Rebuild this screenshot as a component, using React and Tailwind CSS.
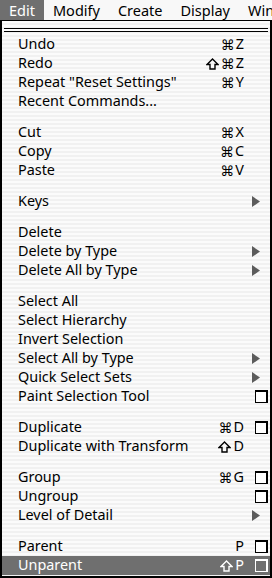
import React from 'react';

const CMD = '\u2318';
const SHIFT = '\u21E7';

// each group is separated by a blank gap
const groups = [
  [
    { label: 'Undo', key: CMD + 'Z' },
    { label: 'Redo', key: SHIFT + CMD + 'Z' },
    { label: 'Repeat "Reset Settings"', key: CMD + 'Y' },
    { label: 'Recent Commands...' }
  ],
  [
    { label: 'Cut', key: CMD + 'X' },
    { label: 'Copy', key: CMD + 'C' },
    { label: 'Paste', key: CMD + 'V' }
  ],
  [{ label: 'Keys', sub: true }],
  [
    { label: 'Delete' },
    { label: 'Delete by Type', sub: true },
    { label: 'Delete All by Type', sub: true }
  ],
  [
    { label: 'Select All' },
    { label: 'Select Hierarchy' },
    { label: 'Invert Selection' },
    { label: 'Select All by Type', sub: true },
    { label: 'Quick Select Sets', sub: true },
    { label: 'Paint Selection Tool', box: true }
  ],
  [
    { label: 'Duplicate', key: CMD + 'D', box: true },
    { label: 'Duplicate with Transform', key: SHIFT + 'D' }
  ],
  [
    { label: 'Group', key: CMD + 'G', box: true },
    { label: 'Ungroup', box: true },
    { label: 'Level of Detail', sub: true }
  ],
  [
    { label: 'Parent', key: 'P', box: true },
    { label: 'Unparent', key: SHIFT + 'P', box: true, active: true }
  ]
];

const menus = ['Modify', 'Create', 'Display', 'Window'];

function OptionBox({ active }) {
  return (
    <span
      className={`block w-[13px] h-[13px] border-l-[1.5px] border-b-[1.5px] border-t-[2.5px] border-r-[2.5px] ${
        active ? 'border-white bg-[#6f6f6f]' : 'border-black bg-white'
      }`}
    />
  );
}

function Arrow() {
  return (
    <svg width="8" height="11" viewBox="0 0 8 11" className="mr-[8px]">
      <path d="M0 0 L8 5.5 L0 11 Z" fill="#5c5c5c" />
    </svg>
  );
}

function ShiftGlyph({ active }) {
  return (
    <svg width="13" height="12" viewBox="0 0 13 12" className="mr-[2px]">
      <path
        d="M6.5 1 L12 6.5 H9 V11 H4 V6.5 H1 Z"
        fill="none"
        stroke={active ? '#fff' : '#000'}
        strokeWidth="1.4"
        strokeLinejoin="miter"
      />
    </svg>
  );
}

function Key({ text, active }) {
  return (
    <span className="whitespace-nowrap flex items-center">
      {[...text].map((c, i) => {
        if (c === SHIFT) return <ShiftGlyph key={i} active={active} />;
        if (c === CMD)
          return (
            <span key={i} className="text-[14px] mr-[1px]" style={{ fontFamily: '"DejaVu Sans", sans-serif' }}>
              {c}
            </span>
          );
        return <span key={i}>{c}</span>;
      })}
    </span>
  );
}

function Item({ item }) {
  return (
    <div
      className={`flex items-center h-[19px] pl-[16px] ${
        item.active ? 'bg-[#6f6f6f] text-white' : 'text-black'
      }`}
    >
      <span className="flex-1 whitespace-nowrap">{item.label}</span>
      {item.key && <Key text={item.key} active={item.active} />}
      <span className="w-[26px] flex items-center justify-end pr-[2px]">
        {item.sub && <Arrow />}
        {item.box && <OptionBox active={item.active} />}
      </span>
    </div>
  );
}

export default function App() {
  return (
    <div
      className="w-[272px] h-[578px] overflow-hidden bg-white text-[14.4px] leading-none"
      style={{ fontFamily: '"Noto Sans", "Open Sans", sans-serif' }}
    >
      {/* menu bar */}
      <div className="flex h-[21px] border-b border-black bg-[#f8f8f8] whitespace-nowrap text-[14.5px]">
        <div className="flex items-center px-[9px] bg-[#6f6f6f] text-white">Edit</div>
        {menus.map((m) => (
          <div key={m} className="flex items-center px-[9px]">
            {m}
          </div>
        ))}
      </div>

      {/* menu body */}
      <div className="h-[557px] border-x-2 border-b-2 border-black bg-[repeating-linear-gradient(to_bottom,#fbfbfb_0px,#fbfbfb_2px,#f1f1f1_2px,#f1f1f1_4px)]">
        <div className="h-[14px] flex flex-col pt-[7px] px-[2px] gap-[2px]">
          <div className="h-px bg-black" />
          <div className="h-px bg-black" />
        </div>
        {groups.map((g, gi) => (
          <div key={gi} className={gi > 0 ? 'mt-[12px]' : ''}>
            {g.map((item) => (
              <Item key={item.label} item={item} />
            ))}
          </div>
        ))}
      </div>
    </div>
  );
}
